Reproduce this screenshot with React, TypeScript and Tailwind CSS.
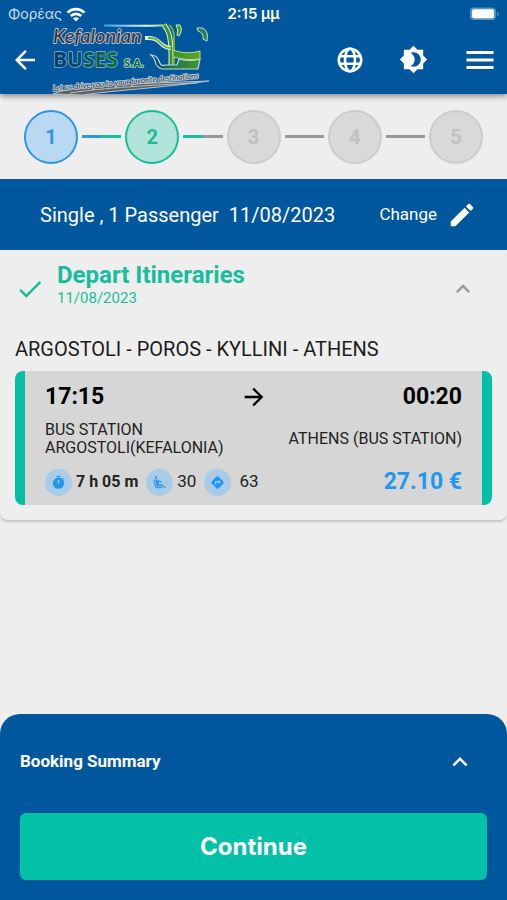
import React from "react";
import {
  MdAirlineSeatReclineExtra,
  MdArrowBack,
  MdArrowForward,
  MdBrightness4,
  MdCheck,
  MdDirections,
  MdEdit,
  MdExpandLess,
  MdMenu,
  MdTimer,
} from "react-icons/md";

function StatusBar() {
  return (
    <div className="grid h-7 grid-cols-3 items-center px-2 text-white">
      <div className="flex items-center gap-1 font-[Inter,sans-serif] text-sm">
        <span className="text-[#c9def0]">Φορέας</span>
        <svg viewBox="0 0 20 15" className="h-[15px] w-5" fill="none" stroke="currentColor" strokeWidth="2.7" aria-hidden="true">
          <path d="M1.6 5.6a12 12 0 0 1 16.8 0" />
          <path d="M4.8 9a7.4 7.4 0 0 1 10.4 0" />
          <path d="M10 14.6 7 11.6a4.3 4.3 0 0 1 6 0z" fill="currentColor" stroke="none" />
        </svg>
      </div>
      <div className="text-center font-[Inter,sans-serif] text-[15px] font-semibold">2:15 μμ</div>
      <svg viewBox="0 0 31 14" className="h-[14px] w-[31px] justify-self-end" aria-hidden="true">
        <rect x="2" y="0.5" width="26" height="12.6" rx="4" fill="#5b92c4" />
        <rect x="4" y="2.3" width="22" height="9" rx="2" fill="#fff" />
        <path d="M29 4.8v4.4q1.8-.7 1.8-2.2T29 4.8z" fill="#5b92c4" />
      </svg>
    </div>
  );
}

function Logo() {
  return (
    <svg viewBox="0 0 160 72" className="h-[72px] w-40 overflow-visible" role="img" aria-label="Kefalonian Buses S.A.">
      <defs>
        <linearGradient id="name" x1="0" x2="1">
          <stop offset="0" stopColor="#06396c" />
          <stop offset="0.45" stopColor="#075264" />
          <stop offset="1" stopColor="#08702f" />
        </linearGradient>
        <linearGradient id="roof" gradientUnits="userSpaceOnUse" x1="53" y1="0" x2="122" y2="0">
          <stop offset="0" stopColor="#3aa5dc" />
          <stop offset="0.6" stopColor="#e9f5ef" />
          <stop offset="1" stopColor="#83b94a" />
        </linearGradient>
        <linearGradient id="front" x1="0" x2="1">
          <stop offset="0" stopColor="#3c9528" />
          <stop offset="1" stopColor="#5fa51c" />
        </linearGradient>
        <linearGradient id="bumper" x1="0" x2="1">
          <stop offset="0" stopColor="#07457a" />
          <stop offset="0.35" stopColor="#1b6a50" />
          <stop offset="1" stopColor="#459b28" />
        </linearGradient>
      </defs>
      <text x="1" y="19" fill="#3b3437" stroke="#b4c8dc" strokeWidth="1.8" strokeLinejoin="round" paintOrder="stroke" className="font-[Lato,sans-serif] text-[20px] font-medium italic">
        Kefalonian
      </text>
      <text x="1" y="43" fill="url(#name)" stroke="#8fb8d2" strokeWidth="1.4" strokeLinejoin="round" paintOrder="stroke" className="font-['Open_Sans',sans-serif] text-[21px] font-bold">
        BUSES
      </text>
      <text x="72" y="43" fill="#0b6a3a" stroke="#b8dcd4" strokeWidth="1.6" strokeLinejoin="round" paintOrder="stroke" className="font-['Open_Sans',sans-serif] text-[11px] font-bold">
        S.A.
      </text>
      <path d="M1 70C24 60 80 60 157 57 108 64 66 66 30 71z" fill="#5c6063" stroke="#b7c3cf" strokeWidth="1" />
      <path d="M18 69C50 64 100 61 145 59" fill="none" stroke="#cfd5da" strokeWidth="0.8" />
      <text x="1" y="67" transform="rotate(-5 1 67)" fill="#33363c" stroke="#c6d4e0" strokeWidth="1.6" strokeLinejoin="round" paintOrder="stroke" className="font-[Lato,sans-serif] text-[8px] italic">
        Let us drive you to your favorite destinations
      </text>
      <path d="M52 1.4Q90 2.2 114 1.2" fill="none" stroke="url(#roof)" strokeWidth="2" />
      <path d="M112 1C118 8 118 14 119 25V43" fill="none" stroke="#e5f4db" strokeWidth="5" />
      <path d="M112 1C118 8 118 14 119 25V43" fill="none" stroke="#389329" strokeWidth="3" />
      <path d="M117 1Q122 4 122 13V40" fill="none" stroke="#6fae35" strokeWidth="2" />
      <path d="M124 1h4q3 5-1 11l-2-1q2-5-1-10z" fill="#48992b" stroke="#dcebd4" strokeWidth="1" />
      <path d="M145 4h5q7 2 5 13l-4-2q1-6-5-8z" fill="#267c55" stroke="#c2dfd8" strokeWidth="1" />
      <path d="M93 14C106 13 107 19 112 22Q115 24 119 24" fill="none" stroke="#e5f4ef" strokeWidth="4" />
      <path d="M96 14C106 13 107 19 112 22Q115 24 119 24" fill="none" stroke="#72ad42" strokeWidth="2" />
      <path d="M121 26Q134 31 148 27V35Q136 37 121 33z" fill="url(#front)" stroke="#b4d795" strokeWidth="1" />
      <path d="M99 31Q105 31 107 37T113 41H125L127 35Q138 38 148 35L146 45H110Q104 43 103 37 102 33 99 31z" fill="url(#bumper)" stroke="#bed9d4" strokeWidth="1.2" />
    </svg>
  );
}

function Globe() {
  return (
    <svg viewBox="0 0 30 30" className="size-[30px]" fill="none" stroke="currentColor" strokeWidth="2.6" aria-hidden="true">
      <circle cx="15" cy="15" r="11.2" />
      <ellipse cx="15" cy="15" rx="5" ry="11.2" />
      <path d="M5 11.2h20M5 18.8h20" />
    </svg>
  );
}

function Header() {
  return (
    <header className="relative bg-[#01579e] text-white shadow-[0_2px_6px_rgba(0,0,0,0.45)]">
      <StatusBar />
      <div className="flex h-[66px] items-center justify-between pr-[9px] pb-[3px] pl-2.5">
        <div className="flex items-center gap-3">
          <button type="button" aria-label="Back">
            <MdArrowBack size={30} />
          </button>
          <Logo />
        </div>
        <div className="flex items-center gap-[34px]">
          <button type="button" aria-label="Language">
            <Globe />
          </button>
          <button type="button" aria-label="Dark mode">
            <MdBrightness4 size={29} />
          </button>
          <button type="button" aria-label="Menu">
            <MdMenu size={36} />
          </button>
        </div>
      </div>
    </header>
  );
}

const steps = [
  { n: 1, circle: "border-[#2e94e8] bg-[#b9d8f2] text-[#2e94e8]", line: "from-[#2e94e8] to-[#15bf9f]" },
  { n: 2, circle: "border-[#18bd9c] bg-[#b3e4da] text-[#18bd9c]", line: "from-[#15bf9f] to-[#999999]" },
  { n: 3, circle: "border-[#cccccc] bg-[#d9d9d9] text-[#c0c0c0]", line: "from-[#999999] to-[#999999]" },
  { n: 4, circle: "border-[#cccccc] bg-[#d9d9d9] text-[#c0c0c0]", line: "from-[#999999] to-[#999999]" },
  { n: 5, circle: "border-[#cccccc] bg-[#d9d9d9] text-[#c0c0c0]", line: "" },
];

function Stepper() {
  return (
    <ol className="flex h-[85px] items-center px-6">
      {steps.map((s) => (
        <li key={s.n} className={s.line ? "flex flex-1 items-center" : "flex items-center"}>
          <span className={"flex size-[54px] shrink-0 items-center justify-center rounded-full border-2 text-xl font-bold " + s.circle}>
            {s.n}
          </span>
          {s.line && <span className={"mx-1 h-[3px] flex-1 bg-linear-to-r from-50% to-50% " + s.line} />}
        </li>
      ))}
    </ol>
  );
}

function Badge({ children }: { children: React.ReactNode }) {
  return (
    <span className="flex size-[27px] items-center justify-center rounded-full bg-[#a9cbe6] text-[#2196f3]">{children}</span>
  );
}

function Itinerary() {
  return (
    <article className="rounded-lg border-x-10 border-[#03bfa5] bg-[#d6d6d6] px-5 pt-2.5 pb-2">
      <div className="flex h-8 items-center justify-between text-[23px] font-bold text-black">
        <time>17:15</time>
        <MdArrowForward size={28} />
        <time>00:20</time>
      </div>
      <div className="mt-2 flex items-center justify-between text-base leading-[18px] text-[#222222]">
        <p>
          BUS STATION
          <br />
          ARGOSTOLI(KEFALONIA)
        </p>
        <p>ATHENS (BUS STATION)</p>
      </div>
      <div className="mt-2.5 flex h-[30px] items-center justify-between">
        <div className="flex items-center gap-1 text-[17px] text-[#222222]">
          <Badge>
            <MdTimer size={15} />
          </Badge>
          <span className="mr-1 text-base font-bold">7 h 05 m</span>
          <Badge>
            <MdAirlineSeatReclineExtra size={15} />
          </Badge>
          <span className="mr-1">30</span>
          <Badge>
            <MdDirections size={15} />
          </Badge>
          <span className="ml-1">63</span>
        </div>
        <span className="text-[23px] font-bold text-[#2196f3]">27.10 €</span>
      </div>
    </article>
  );
}

export default function App() {
  return (
    <div className="flex min-h-screen flex-col bg-[#eeeeee] font-[Roboto,sans-serif]">
      <Header />
      <main className="flex flex-1 flex-col">
        <Stepper />
        <div className="flex h-[71px] items-center justify-between bg-[#01579e] pr-[30px] pl-10 text-white">
          <p className="text-xl whitespace-pre">Single , 1 Passenger  11/08/2023</p>
          <button type="button" className="flex items-center gap-2.5 text-[17px]">
            Change
            <MdEdit size={30} />
          </button>
        </div>
        <section className="rounded-lg px-[15px] pt-3 pb-[15px] shadow-[0_2px_2px_rgba(0,0,0,0.18)]">
          <div className="flex items-center justify-between pr-[15px]">
            <div className="flex items-center gap-3">
              <MdCheck size={30} className="mt-2 text-[#18bd9c]" />
              <div className="text-[#18bd9c]">
                <h2 className="text-2xl leading-[26px] font-bold">Depart Itineraries</h2>
                <p className="text-[15px] leading-5">11/08/2023</p>
              </div>
            </div>
            <button type="button" aria-label="Collapse itineraries" className="mt-2 text-[#999999]">
              <MdExpandLess size={28} />
            </button>
          </div>
          <h3 className="mt-[27px] mb-2 text-xl leading-7 text-[#1c1c1c]">ARGOSTOLI - POROS - KYLLINI - ATHENS</h3>
          <Itinerary />
        </section>
        <section className="mt-auto rounded-t-[20px] bg-[#01579e] px-5 pb-5 text-white">
          <button type="button" className="flex h-[99px] w-full items-center justify-between pr-3 pb-1 text-[17px] font-bold">
            <span>Booking Summary</span>
            <MdExpandLess size={30} />
          </button>
          <button type="button" className="h-[67px] w-full rounded-md bg-[#03c1a8] font-[Inter,sans-serif] text-2xl font-bold">
            Continue
          </button>
        </section>
      </main>
    </div>
  );
}
